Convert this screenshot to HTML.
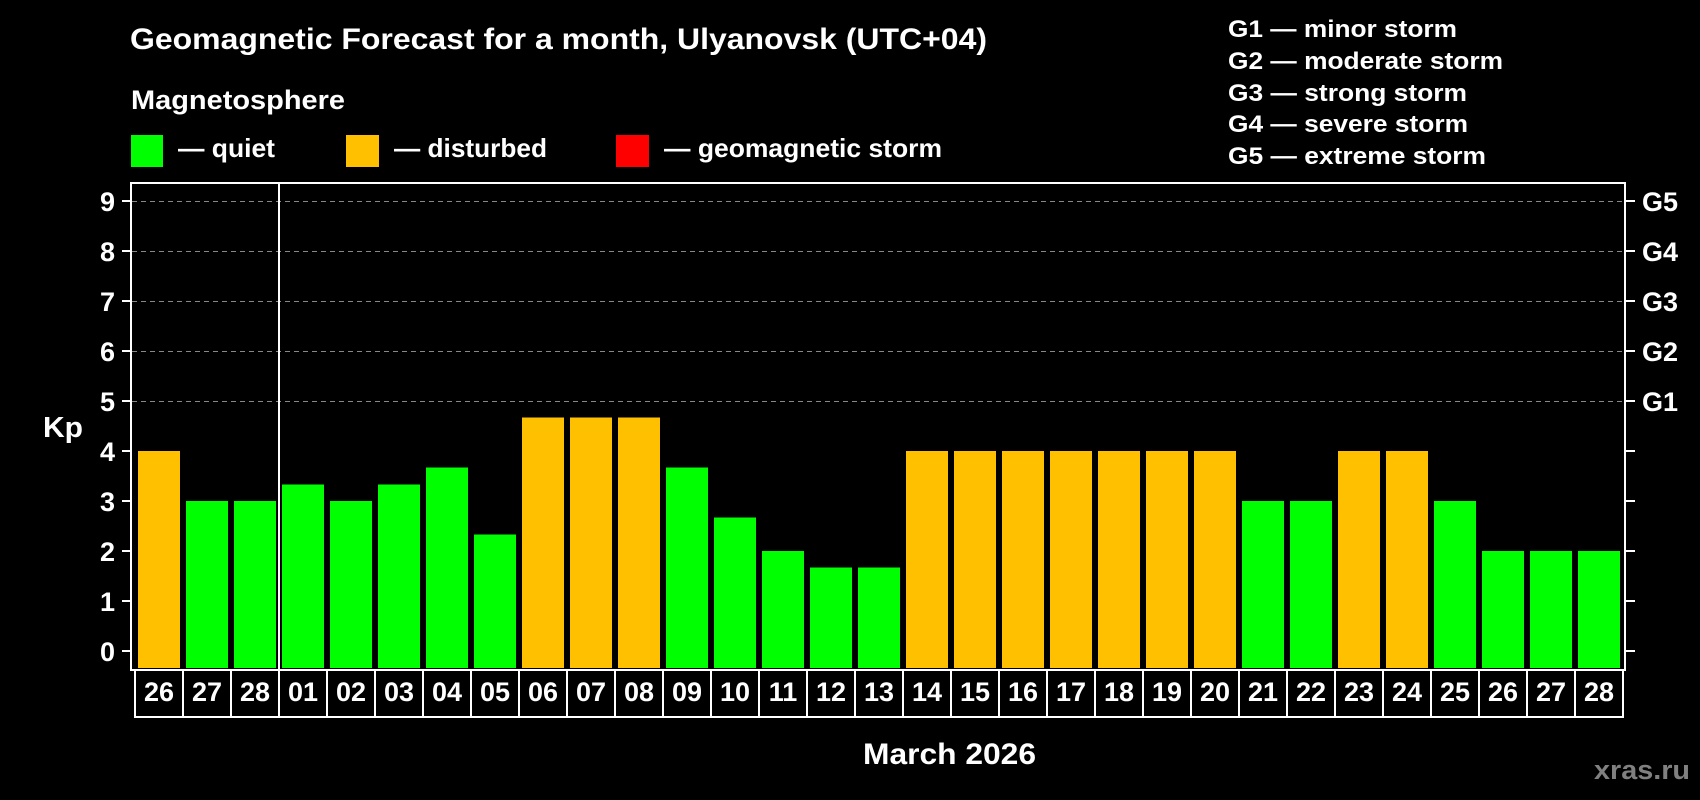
<!DOCTYPE html>
<html><head><meta charset="utf-8"><style>
html,body{margin:0;padding:0;background:#000;}
svg{display:block;}
text{font-family:"Liberation Sans",Arial,sans-serif;font-weight:bold;fill:#fff;}
</style></head><body>
<svg width="1700" height="800" viewBox="0 0 1700 800" xmlns="http://www.w3.org/2000/svg">
<rect width="1700" height="800" fill="#000"/>
<text x="130" y="49" font-size="30" textLength="857" lengthAdjust="spacingAndGlyphs">Geomagnetic Forecast for a month, Ulyanovsk (UTC+04)</text>
<text x="131" y="109" font-size="27" textLength="214" lengthAdjust="spacingAndGlyphs">Magnetosphere</text>
<rect x="131" y="135" width="32" height="32" fill="#00ff00"/>
<rect x="346" y="135" width="33" height="32" fill="#ffc000"/>
<rect x="616" y="135" width="33" height="32" fill="#ff0000"/>
<text x="178" y="157" font-size="26" textLength="97" lengthAdjust="spacingAndGlyphs">— quiet</text>
<text x="394" y="157" font-size="26" textLength="153" lengthAdjust="spacingAndGlyphs">— disturbed</text>
<text x="664" y="157" font-size="26" textLength="278" lengthAdjust="spacingAndGlyphs">— geomagnetic storm</text>
<g font-size="24">
<text x="1228" y="37" textLength="229" lengthAdjust="spacingAndGlyphs">G1 — minor storm</text>
<text x="1228" y="69" textLength="275" lengthAdjust="spacingAndGlyphs">G2 — moderate storm</text>
<text x="1228" y="101" textLength="239" lengthAdjust="spacingAndGlyphs">G3 — strong storm</text>
<text x="1228" y="132" textLength="240" lengthAdjust="spacingAndGlyphs">G4 — severe storm</text>
<text x="1228" y="164" textLength="258" lengthAdjust="spacingAndGlyphs">G5 — extreme storm</text>
</g>
<g stroke="#888" stroke-width="1" stroke-dasharray="5,4">
<line x1="132" y1="201.5" x2="1624" y2="201.5"/>
<line x1="132" y1="251.5" x2="1624" y2="251.5"/>
<line x1="132" y1="301.5" x2="1624" y2="301.5"/>
<line x1="132" y1="351.5" x2="1624" y2="351.5"/>
<line x1="132" y1="401.5" x2="1624" y2="401.5"/>
</g>
<g>
<rect x="138" y="451" width="42" height="217" fill="#ffc000"/>
<rect x="186" y="501" width="42" height="167" fill="#00ff00"/>
<rect x="234" y="501" width="42" height="167" fill="#00ff00"/>
<rect x="282" y="484.5" width="42" height="183.5" fill="#00ff00"/>
<rect x="330" y="501" width="42" height="167" fill="#00ff00"/>
<rect x="378" y="484.5" width="42" height="183.5" fill="#00ff00"/>
<rect x="426" y="467.5" width="42" height="200.5" fill="#00ff00"/>
<rect x="474" y="534.5" width="42" height="133.5" fill="#00ff00"/>
<rect x="522" y="417.5" width="42" height="250.5" fill="#ffc000"/>
<rect x="570" y="417.5" width="42" height="250.5" fill="#ffc000"/>
<rect x="618" y="417.5" width="42" height="250.5" fill="#ffc000"/>
<rect x="666" y="467.5" width="42" height="200.5" fill="#00ff00"/>
<rect x="714" y="517.5" width="42" height="150.5" fill="#00ff00"/>
<rect x="762" y="551" width="42" height="117" fill="#00ff00"/>
<rect x="810" y="567.5" width="42" height="100.5" fill="#00ff00"/>
<rect x="858" y="567.5" width="42" height="100.5" fill="#00ff00"/>
<rect x="906" y="451" width="42" height="217" fill="#ffc000"/>
<rect x="954" y="451" width="42" height="217" fill="#ffc000"/>
<rect x="1002" y="451" width="42" height="217" fill="#ffc000"/>
<rect x="1050" y="451" width="42" height="217" fill="#ffc000"/>
<rect x="1098" y="451" width="42" height="217" fill="#ffc000"/>
<rect x="1146" y="451" width="42" height="217" fill="#ffc000"/>
<rect x="1194" y="451" width="42" height="217" fill="#ffc000"/>
<rect x="1242" y="501" width="42" height="167" fill="#00ff00"/>
<rect x="1290" y="501" width="42" height="167" fill="#00ff00"/>
<rect x="1338" y="451" width="42" height="217" fill="#ffc000"/>
<rect x="1386" y="451" width="42" height="217" fill="#ffc000"/>
<rect x="1434" y="501" width="42" height="167" fill="#00ff00"/>
<rect x="1482" y="551" width="42" height="117" fill="#00ff00"/>
<rect x="1530" y="551" width="42" height="117" fill="#00ff00"/>
<rect x="1578" y="551" width="42" height="117" fill="#00ff00"/>
</g>
<rect x="131" y="183" width="1494" height="487" fill="none" stroke="#fff" stroke-width="2"/>
<line x1="279" y1="183" x2="279" y2="669" stroke="#fff" stroke-width="2"/>
<g stroke="#fff" stroke-width="2">
<path d="M122 651H131M122 601H131M122 551H131M122 501H131M122 451H131M122 401H131M122 351H131M122 301H131M122 251H131M122 201H131"/>
<path d="M1625 651H1635M1625 601H1635M1625 551H1635M1625 501H1635M1625 451H1635M1625 401H1635M1625 351H1635M1625 301H1635M1625 251H1635M1625 201H1635"/>
</g>
<g fill="none" stroke="#fff" stroke-width="2">
<rect x="135" y="670" width="1488" height="47"/>
<path d="M183 670V717M231 670V717M279 670V717M327 670V717M375 670V717M423 670V717M471 670V717M519 670V717M567 670V717M615 670V717M663 670V717M711 670V717M759 670V717M807 670V717M855 670V717M903 670V717M951 670V717M999 670V717M1047 670V717M1095 670V717M1143 670V717M1191 670V717M1239 670V717M1287 670V717M1335 670V717M1383 670V717M1431 670V717M1479 670V717M1527 670V717M1575 670V717"/>
</g>
<g font-size="27" text-anchor="middle">
<text x="159" y="701">26</text><text x="207" y="701">27</text><text x="255" y="701">28</text>
<text x="303" y="701">01</text><text x="351" y="701">02</text><text x="399" y="701">03</text>
<text x="447" y="701">04</text><text x="495" y="701">05</text><text x="543" y="701">06</text>
<text x="591" y="701">07</text><text x="639" y="701">08</text><text x="687" y="701">09</text>
<text x="735" y="701">10</text><text x="783" y="701">11</text><text x="831" y="701">12</text>
<text x="879" y="701">13</text><text x="927" y="701">14</text><text x="975" y="701">15</text>
<text x="1023" y="701">16</text><text x="1071" y="701">17</text><text x="1119" y="701">18</text>
<text x="1167" y="701">19</text><text x="1215" y="701">20</text><text x="1263" y="701">21</text>
<text x="1311" y="701">22</text><text x="1359" y="701">23</text><text x="1407" y="701">24</text>
<text x="1455" y="701">25</text><text x="1503" y="701">26</text><text x="1551" y="701">27</text>
<text x="1599" y="701">28</text>
</g>
<g font-size="27" text-anchor="end">
<text x="115" y="661">0</text><text x="115" y="611">1</text><text x="115" y="561">2</text>
<text x="115" y="511">3</text><text x="115" y="461">4</text><text x="115" y="411">5</text>
<text x="115" y="361">6</text><text x="115" y="311">7</text><text x="115" y="261">8</text>
<text x="115" y="211">9</text>
</g>
<text x="43" y="437" font-size="29" textLength="40" lengthAdjust="spacingAndGlyphs">Kp</text>
<g font-size="27">
<text x="1642" y="211">G5</text>
<text x="1642" y="261">G4</text>
<text x="1642" y="311">G3</text>
<text x="1642" y="361">G2</text>
<text x="1642" y="411">G1</text>
</g>
<text x="863" y="764" font-size="30" textLength="173" lengthAdjust="spacingAndGlyphs">March 2026</text>
<text x="1594" y="779" font-size="27" style="fill:#808080" textLength="96" lengthAdjust="spacingAndGlyphs">xras.ru</text>
</svg>
</body></html>
